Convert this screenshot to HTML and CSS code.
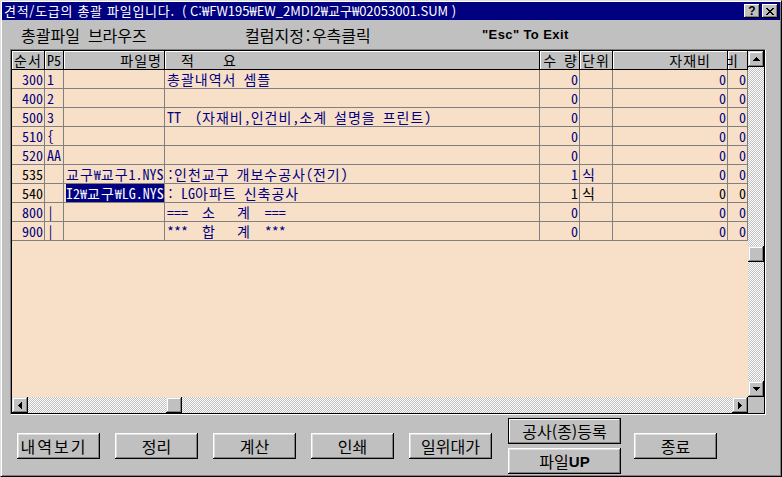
FILE: index.html
```html
<!DOCTYPE html>
<html lang="ko">
<head>
<meta charset="utf-8">
<link rel="stylesheet" href="styles.css">
</head>
<body>
<div class="window">
  <div class="titlebar">
    <span class="title"><span class="title-ko">견적/도급의 총괄 파일입니다.</span>&nbsp;&nbsp;( C:₩FW195₩EW_2MDI2₩교구₩02053001.SUM )</span>
    <span class="capbtn help">?</span>
    <span class="capbtn close"><svg width="8" height="7" viewBox="0 0 8 7"><path d="M0 0h2v1H0zM6 0h2v1H6zM1 1h2v1H1zM5 1h2v1H5zM2 2h4v1H2zM3 3h2v1H3zM2 4h4v1H2zM1 5h2v1H1zM5 5h2v1H5zM0 6h2v1H0zM6 6h2v1H6z" fill="#000"/></svg></span>
  </div>
  <div class="labels">
    <span class="lbl1">총괄파일 브라우즈</span>
    <span class="lbl2">컬럼지정:우측클릭</span>
    <span class="lbl3">"Esc" To Exit</span>
  </div>
  <div class="gridwrap">
    <div class="grid">
      <div class="sheet">
        <div class="row head">
          <div class="cell"><span class="k">순서</span></div>
          <div class="cell">P5</div>
          <div class="cell r2"><span class="k">파일명</span></div>
          <div class="cell">  <span class="k">적</span>    <span class="k">요</span></div>
          <div class="cell r"><span class="k">수</span> <span class="k">량</span></div>
          <div class="cell"><span class="k">단위</span></div>
          <div class="cell r16"><span class="k">자재비</span></div>
          <div class="cell clipend"><span class="k shift">비</span></div>
        </div>
        <div class="row">
          <div class="cell r">300</div><div class="cell">1</div><div class="cell"></div><div class="cell"><span class="k">총괄내역서</span> <span class="k">셈플</span></div>
          <div class="cell r">0</div><div class="cell"></div><div class="cell r">0</div><div class="cell r">0</div>
        </div>
        <div class="row">
          <div class="cell r">400</div><div class="cell">2</div><div class="cell"></div><div class="cell"></div>
          <div class="cell r">0</div><div class="cell"></div><div class="cell r">0</div><div class="cell r">0</div>
        </div>
        <div class="row">
          <div class="cell r">500</div><div class="cell">3</div><div class="cell"></div><div class="cell">TT  (<span class="k">자재비</span>,<span class="k">인건비</span>,<span class="k">소계</span> <span class="k">설명을</span> <span class="k">프린트</span>)</div>
          <div class="cell r">0</div><div class="cell"></div><div class="cell r">0</div><div class="cell r">0</div>
        </div>
        <div class="row">
          <div class="cell r">510</div><div class="cell">{</div><div class="cell"></div><div class="cell"></div>
          <div class="cell r">0</div><div class="cell"></div><div class="cell r">0</div><div class="cell r">0</div>
        </div>
        <div class="row">
          <div class="cell r">520</div><div class="cell">AA</div><div class="cell"></div><div class="cell"></div>
          <div class="cell r">0</div><div class="cell"></div><div class="cell r">0</div><div class="cell r">0</div>
        </div>
        <div class="row">
          <div class="cell r blk">535</div><div class="cell"></div><div class="cell"><span class="k">교구</span>₩<span class="k">교구</span>1.NYS</div><div class="cell">:<span class="k">인천교구</span> <span class="k">개보수공사</span>(<span class="k">전기</span>)</div>
          <div class="cell r">1</div><div class="cell"><span class="k">식</span></div><div class="cell r">0</div><div class="cell r">0</div>
        </div>
        <div class="row">
          <div class="cell r blk">540</div><div class="cell"></div><div class="cell"><span class="sel">I2₩<span class="k">교구</span>₩LG.NYS</span></div><div class="cell">: LG<span class="k">아파트</span> <span class="k">신축공사</span></div>
          <div class="cell r blk">1</div><div class="cell blk"><span class="k">식</span></div><div class="cell r blk">0</div><div class="cell r blk">0</div>
        </div>
        <div class="row">
          <div class="cell r">800</div><div class="cell">|</div><div class="cell"></div><div class="cell">===  <span class="k">소</span>   <span class="k">계</span>  ===</div>
          <div class="cell r">0</div><div class="cell"></div><div class="cell r">0</div><div class="cell r">0</div>
        </div>
        <div class="row">
          <div class="cell r">900</div><div class="cell">|</div><div class="cell"></div><div class="cell">***  <span class="k">합</span>   <span class="k">계</span>  ***</div>
          <div class="cell r">0</div><div class="cell"></div><div class="cell r">0</div><div class="cell r">0</div>
        </div>
      </div>
      <div class="vscroll">
        <div class="sbtn"><svg width="7" height="4" viewBox="0 0 7 4"><path d="M3 0h1v1h1v1h1v1h1v1H0V3h1V2h1V1h1z" fill="#000"/></svg></div>
        <div class="vtrack"><div class="sbtn vthumb"></div></div>
        <div class="sbtn"><svg width="7" height="4" viewBox="0 0 7 4"><path d="M0 0h7v1H6v1H5v1H4v1H3V3H2V2H1V1H0z" fill="#000"/></svg></div>
      </div>
      <div class="hscroll">
        <div class="sbtn"><svg width="4" height="7" viewBox="0 0 4 7"><path d="M4 0v7H3V6H2V5H1V4H0V3h1V2h1V1h1V0z" fill="#000"/></svg></div>
        <div class="htrack"><div class="sbtn hthumb"></div></div>
        <div class="sbtn"><svg width="4" height="7" viewBox="0 0 4 7"><path d="M0 0h1v1h1v1h1v1h1v1H3v1H2v1H1v1H0z" fill="#000"/></svg></div>
      </div>
      <div class="corner"></div>
    </div>
  </div>
  <div class="buttons">
    <div class="btn first">내역보기</div>
    <div class="btn">정리</div>
    <div class="btn">계산</div>
    <div class="btn">인쇄</div>
    <div class="btn">일위대가</div>
    <div class="stack">
      <div class="btn wide default">공사(종)등록</div>
      <div class="btn wide">파일<b>UP</b></div>
    </div>
    <div class="btn end">종료</div>
  </div>
</div>
</body>
</html>
```
FILE: styles.css
```css
* { box-sizing: border-box; }
html, body { margin: 0; padding: 0; }
body {
  width: 782px;
  height: 477px;
  overflow: hidden;
  background: #c0c0c0;
  font-family: "Noto Sans CJK KR", "Liberation Sans", sans-serif;
}
.window {
  width: 782px;
  height: 477px;
  background: #c0c0c0;
  border: 1px solid;
  border-color: #dfdfdf #000 #000 #dfdfdf;
  box-shadow: inset 1px 1px #fff, inset -1px -1px #808080;
  padding: 1px;
  display: flex;
  flex-direction: column;
}
.titlebar {
  height: 18px;
  background: #000080;
  display: flex;
  align-items: flex-start;
  padding-left: 2px;
  flex-shrink: 0;
}
.title {
  flex: 1;
  color: #fff;
  font-size: 13px;
  line-height: 18px;
  white-space: pre;
  overflow: hidden;
}
.title-ko { letter-spacing: 0.7px; }
.capbtn {
  width: 16px;
  height: 14px;
  margin-top: 2px;
  background: #c0c0c0;
  box-shadow: inset -1px -1px #000, inset 1px 1px #fff, inset -2px -2px #808080;
  display: flex;
  align-items: center;
  justify-content: center;
  flex-shrink: 0;
}
.help {
  font-family: "Liberation Sans", sans-serif;
  font-weight: bold;
  font-size: 12px;
  line-height: 14px;
  color: #000;
  margin-right: 2px;
}
.close { margin-right: 2px; }
.labels {
  height: 29px;
  display: flex;
  align-items: center;
  padding-left: 18px;
  flex-shrink: 0;
  color: #000;
}
.lbl1, .lbl2 {
  font-family: "Noto Sans Mono CJK KR", "Noto Sans CJK KR", monospace;
  font-size: 16px;
  white-space: pre;
}
.lbl1 { width: 225px; padding-left: 1px; }
.lbl2 { width: 237px; }
.lbl3 {
  font-family: "Liberation Sans", sans-serif;
  font-weight: bold;
  font-size: 13px;
  letter-spacing: 0.4px;
}
.gridwrap {
  margin-left: 8px;
  width: 756px;
  height: 366px;
  border: 1px solid;
  border-color: #808080 #fff #fff #808080;
  flex-shrink: 0;
}
.grid {
  width: 754px;
  height: 364px;
  border: 1px solid #000;
  display: grid;
  grid-template-columns: 736px 16px;
  grid-template-rows: 346px 16px;
}
.sheet {
  background: #f8e0c8;
  overflow: hidden;
}
.row {
  display: grid;
  grid-template-columns: 33px 19px 101px 375px 40px 33px 115px 20px;
  height: 19px;
}
.cell {
  height: 19px;
  border-right: 1px solid #808080;
  border-bottom: 1px solid #808080;
  font-family: "Noto Sans Mono CJK KR", "DejaVu Sans Mono", monospace;
  font-size: 14px;
  line-height: 18px;
  white-space: pre;
  overflow: hidden;
  padding: 0 1px 0 2px;
  color: #000080;
}
.k { letter-spacing: 1px; }
.cell.r { text-align: right; padding: 0 1px 0 0; }
.cell.r2 { text-align: right; padding: 0 2px 0 0; }
.cell.r16 { text-align: right; padding: 0 16px 0 0; }
.cell.blk { color: #000; }
.head .cell {
  background: #c0c0c0;
  color: #000;
  border-color: #000;
  box-shadow: inset 1px 1px #fff;
}
.head .clipend { padding: 0; }
.shift {
  display: inline-block;
  margin-left: -3px;
}
.sel {
  background: #000080;
  color: #fff;
  display: inline-block;
  height: 18px;
}
.sbtn {
  width: 16px;
  height: 16px;
  flex-shrink: 0;
  background: #c0c0c0;
  box-shadow: inset -1px -1px #000, inset 1px 1px #dfdfdf, inset -2px -2px #808080, inset 2px 2px #fff;
  display: flex;
  align-items: center;
  justify-content: center;
}
.vscroll {
  display: flex;
  flex-direction: column;
}
.vtrack, .htrack {
  flex: 1;
  background-color: #c0c0c0;
  background-image: repeating-conic-gradient(#fff 0 25%, #c0c0c0 0 50%);
  background-size: 2px 2px;
}
.vthumb { margin-top: 179px; }
.hscroll { display: flex; }
.htrack { display: flex; }
.hthumb { margin-left: 138px; }
.corner { background: #c0c0c0; }
.buttons {
  display: flex;
  align-items: center;
  padding-left: 15px;
  margin-top: 3px;
  gap: 15px;
}
.btn {
  width: 83px;
  height: 26px;
  background: #c0c0c0;
  box-shadow: inset -1px -1px #000, inset 1px 1px #fff, inset -2px -2px #808080, inset 2px 2px #dfdfdf;
  display: flex;
  align-items: center;
  justify-content: center;
  font-size: 16px;
  color: #000;
  white-space: nowrap;
}
.btn.first { padding-right: 9px; letter-spacing: 2px; }
.btn b { font-family: "Liberation Sans", sans-serif; font-size: 15px; }
.stack {
  display: flex;
  flex-direction: column;
  gap: 4px;
  margin-left: 1px;
}
.btn.wide { width: 113px; }
.btn.default {
  border: 1px solid #000;
  box-shadow: inset -1px -1px #808080, inset 1px 1px #fff;
}
.btn.end { margin-left: -2px; }
```
